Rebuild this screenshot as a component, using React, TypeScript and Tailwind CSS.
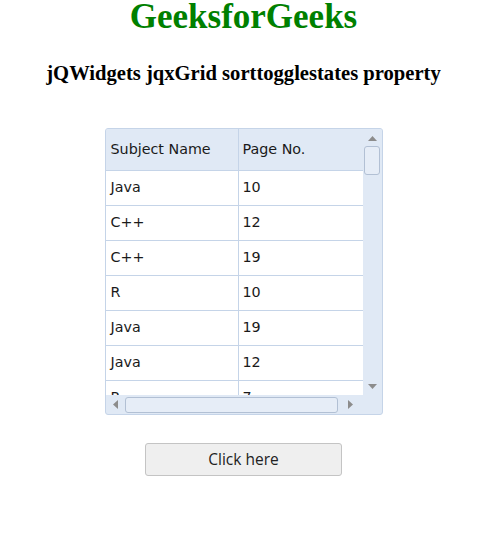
import React from "react";

const rows: [string, string][] = [
  ["Java", "10"],
  ["C++", "12"],
  ["C++", "19"],
  ["R", "10"],
  ["Java", "19"],
  ["Java", "12"],
  ["R", "7"],
];

export default function App() {
  return (
    <div className="w-[487px] bg-white flex flex-col items-center">
      <h1 className="font-['Liberation_Serif',serif] font-bold text-[35px] leading-[34px] text-[#008000]">
        GeeksforGeeks
      </h1>
      <h3 className="font-['Liberation_Serif',serif] font-bold text-[20.6px] leading-[24px] text-black mt-[27px]">
        jQWidgets jqxGrid sorttogglestates property
      </h3>
      <div className="mt-[43px] w-[278px] h-[287px] border border-[#c5d4e8] rounded-[3px] bg-[#e0e9f5] flex flex-col overflow-hidden font-['DejaVu_Sans',Verdana,sans-serif] text-[14.3px] text-[#1a1a1a]">
        <div className="flex flex-1 min-h-0">
          <div className="w-[257px] flex flex-col overflow-hidden">
            <div className="flex h-[42px] shrink-0 border-b border-[#c5d4e8] bg-[#e0e9f5]">
              <div className="w-[133px] border-r border-[#c5d4e8] flex items-center pl-[5px]">Subject Name</div>
              <div className="flex-1 flex items-center pl-[4px]">Page No.</div>
            </div>
            <div className="bg-white flex-1 overflow-hidden">
              {rows.map((r, i) => (
                <div key={i} className="flex h-[35px] border-b border-[#c5d4e8]">
                  <div className="w-[133px] border-r border-[#c5d4e8] flex items-center pl-[5px]">{r[0]}</div>
                  <div className="flex-1 flex items-center pl-[4px]">{r[1]}</div>
                </div>
              ))}
            </div>
          </div>
          <div className="w-[19px] flex flex-col items-center bg-[#e0e9f5]">
            <div className="h-[17px] w-full flex items-center justify-center pt-[1px]">
              <svg width="9" height="5" viewBox="0 0 9 5"><polygon points="0,5 9,5 4.5,0" fill="#8c8c8c" /></svg>
            </div>
            <div className="w-[16px] h-[29px] border border-[#b2c0d4] rounded-[3px] bg-[#e6edf7]" />
            <div className="flex-1" />
            <div className="h-[17px] w-full flex items-center justify-center">
              <svg width="9" height="5" viewBox="0 0 9 5"><polygon points="0,0 9,0 4.5,5" fill="#8c8c8c" /></svg>
            </div>
          </div>
        </div>
        <div className="h-[19px] shrink-0 flex items-center">
          <div className="w-[19px] flex items-center justify-center">
            <svg width="5" height="9" viewBox="0 0 5 9"><polygon points="5,0 5,9 0,4.5" fill="#8c8c8c" /></svg>
          </div>
          <div className="w-[213px] h-[16px] border border-[#b2c0d4] rounded-[3px] bg-[#e6edf7]" />
          <div className="w-[25px] flex items-center justify-center">
            <svg width="5" height="9" viewBox="0 0 5 9"><polygon points="0,0 0,9 5,4.5" fill="#8c8c8c" /></svg>
          </div>
        </div>
      </div>
      <button className="mt-[28px] w-[197px] h-[33px] bg-[#efefef] border border-[#c4c4c4] rounded-[3px] font-['Open_Sans',sans-serif] text-[15.5px] text-[#222]">
        Click here
      </button>
    </div>
  );
}
